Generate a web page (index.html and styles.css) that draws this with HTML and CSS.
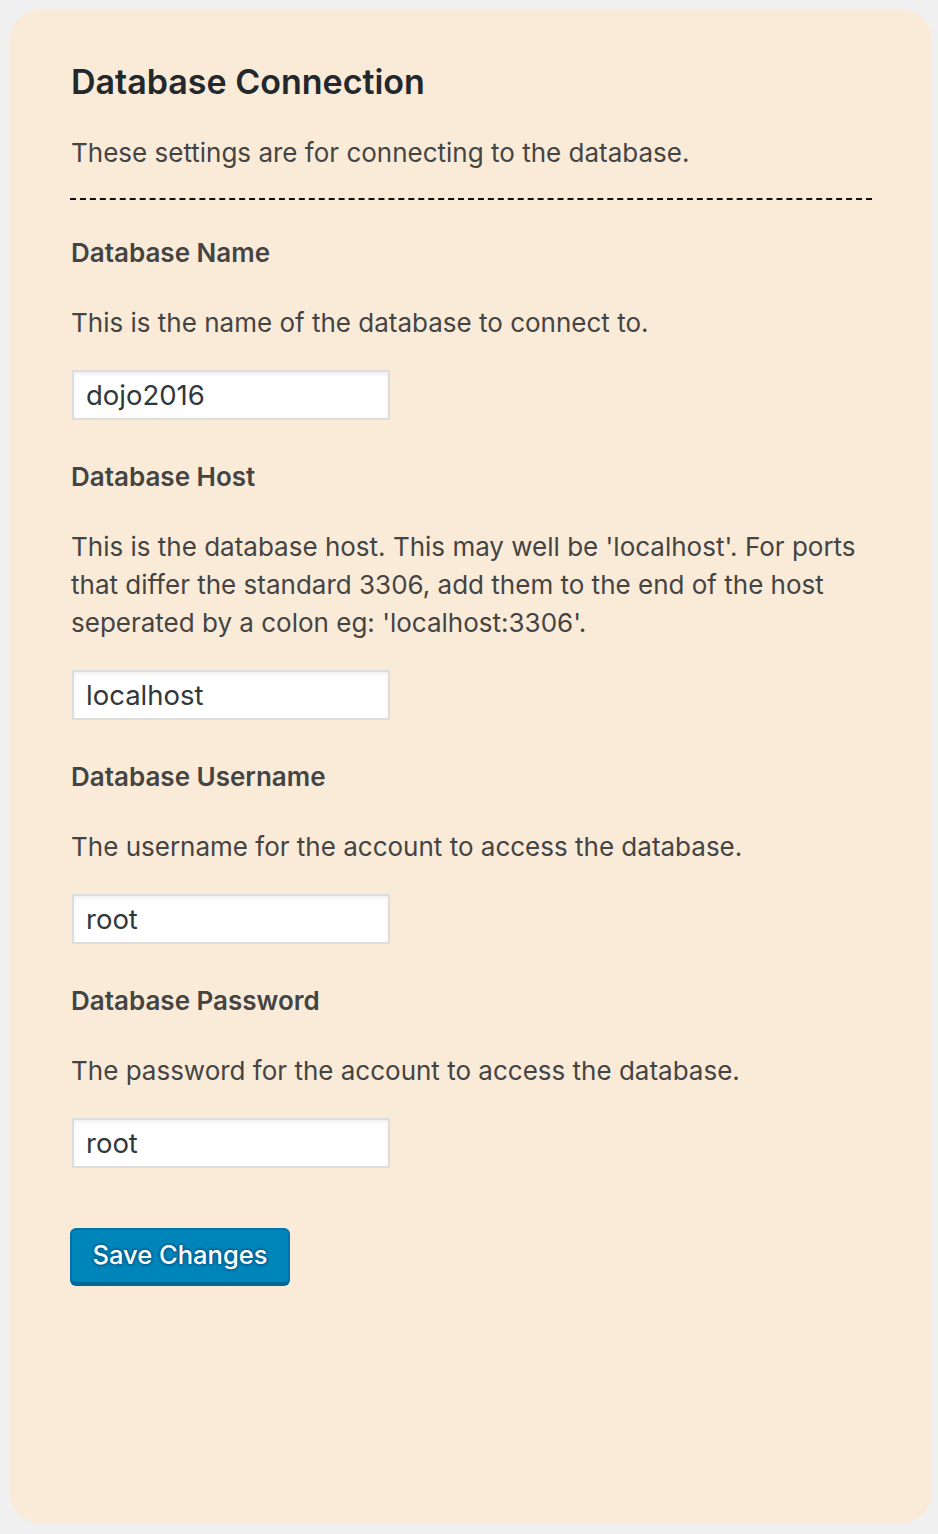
FILE: index.html
```html
<!DOCTYPE html>
<html lang="en">
<head>
<meta charset="utf-8">
<title>Database Connection</title>
<link rel="stylesheet" href="styles.css">
</head>
<body>
<main class="card">
  <h2 class="title">Database Connection</h2>
  <p class="intro">These settings are for connecting to the database.</p>
  <hr class="divider">
  <form class="form">
    <div class="field">
      <label class="label" for="db-name">Database Name</label>
      <p class="desc">This is the name of the database to connect to.</p>
      <input class="input" id="db-name" type="text" value="dojo2016">
    </div>
    <div class="field">
      <label class="label" for="db-host">Database Host</label>
      <p class="desc">This is the database host. This may well be 'localhost'. For ports that differ the standard 3306, add them to the end of the host seperated by a colon eg: 'localhost:3306'.</p>
      <input class="input" id="db-host" type="text" value="localhost">
    </div>
    <div class="field">
      <label class="label" for="db-user">Database Username</label>
      <p class="desc">The username for the account to access the database.</p>
      <input class="input" id="db-user" type="text" value="root">
    </div>
    <div class="field">
      <label class="label" for="db-pass">Database Password</label>
      <p class="desc">The password for the account to access the database.</p>
      <input class="input" id="db-pass" type="text" value="root">
    </div>
    <button class="button" type="button">Save Changes</button>
  </form>
</main>
</body>
</html>
```

FILE: styles.css
```css
html, body {
  margin: 0;
  padding: 0;
}

body {
  background: #f0f0f0;
  padding: 10px 6px 11px 10px;
  font-family: Inter, "Noto Sans", "Liberation Sans", sans-serif;
  color: #444;
}

.card {
  box-sizing: border-box;
  width: 922px;
  height: 1513px;
  background: #faebd8;
  border-radius: 30px;
  padding: 52px 60px 0 60px;
}

.title {
  margin: 0 0 0 1px;
  font-size: 34px;
  line-height: 40px;
  font-weight: 600;
  color: #23282d;
}

.intro {
  margin: 32px 0 0 1px;
  font-size: 26px;
  line-height: 38px;
}

.divider {
  margin: 26px 0 0 0;
  border: 0;
  border-top: 2px dashed #111;
  height: 0;
}

.form {
  display: flex;
  flex-direction: column;
  align-items: flex-start;
}

.field {
  display: flex;
  flex-direction: column;
  align-items: flex-start;
  margin-top: 38px;
}

.field:first-child {
  margin-top: 34px;
}

.label {
  margin-left: 1px;
  font-size: 26px;
  line-height: 38px;
  font-weight: 600;
  color: #444;
}

.desc {
  margin: 32px 0 0 1px;
  font-size: 26px;
  line-height: 38px;
}

.input {
  box-sizing: border-box;
  margin: 28px 0 0 2px;
  width: 318px;
  height: 50px;
  padding: 0 12px;
  border: 2px solid #ddd;
  background: #fff;
  box-shadow: inset 0 2px 4px rgba(0, 0, 0, 0.07);
  font-family: Inter, "Noto Sans", "Liberation Sans", sans-serif;
  font-size: 27.5px;
  color: #32373c;
  outline: none;
}

.button {
  box-sizing: border-box;
  margin-top: 60px;
  width: 220px;
  height: 56px;
  padding: 0 0 3px;
  border: 2px solid #0073aa;
  border-bottom-color: #006799;
  border-radius: 6px;
  background: #0085ba;
  box-shadow: 0 2px 0 #006799;
  color: #fff;
  font-family: Inter, "Noto Sans", "Liberation Sans", sans-serif;
  font-size: 25.5px;
  font-weight: 500;
  text-shadow: 0 -2px 2px #006799, 2px 0 2px #006799, 0 2px 2px #006799, -2px 0 2px #006799;
  cursor: pointer;
}
```
